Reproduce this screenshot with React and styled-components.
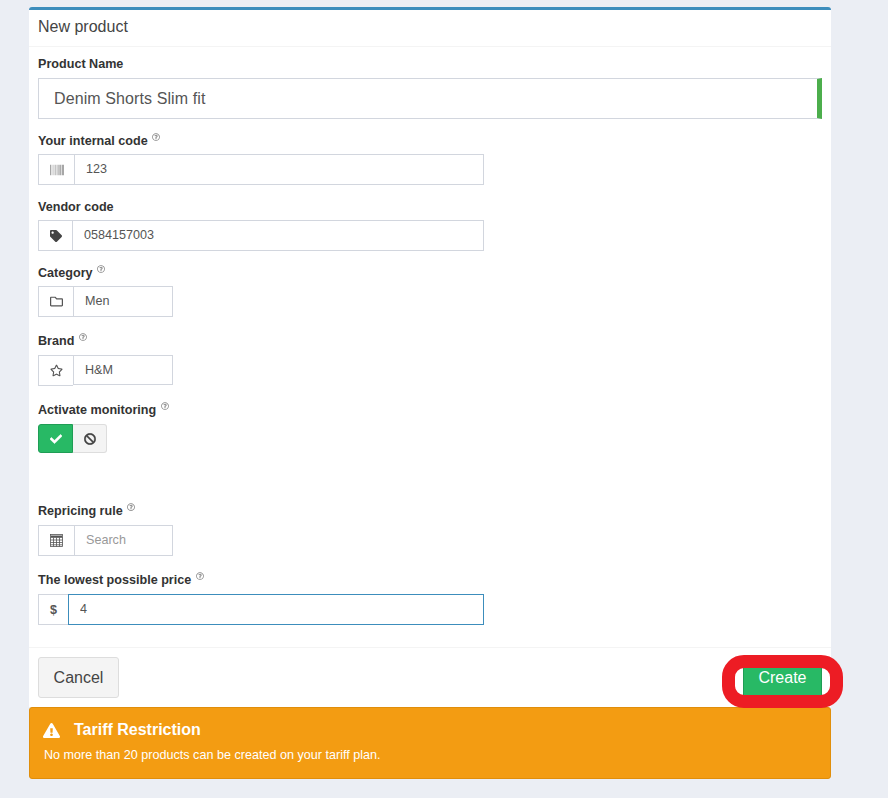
import React from 'react';
import styled, { createGlobalStyle } from 'styled-components';
import {
  FaBarcode,
  FaTag,
  FaRegFolder,
  FaRegStar,
  FaCheck,
  FaBan,
  FaExclamationTriangle,
  FaRegQuestionCircle,
} from 'react-icons/fa';

const GlobalStyle = createGlobalStyle`
  body {
    margin: 0;
    background: #ebeef4;
    font-family: "Liberation Sans", Arial, sans-serif;
    color: #333;
  }
`;

const Page = styled.div`
  width: 802px;
  height: 791px;
  padding: 7px 0 0 29px;
  position: relative;
`;

const Panel = styled.div`
  background: #fff;
  border-top: 3px solid #3c8dbc;
  border-radius: 3px 3px 0 0;
`;

const PanelHeader = styled.div`
  height: 36px;
  line-height: 33px;
  padding: 0 9px;
  font-size: 16px;
  color: #444;
  border-bottom: 1px solid #f4f4f4;
`;

const PanelBody = styled.div`
  padding: 6px 9px 22px;
`;

const Field = styled.div`
  margin-top: ${(props) => props.$top || 0}px;
`;

const Label = styled.label`
  display: block;
  height: ${(props) => (props.$tight ? 20 : 21)}px;
  line-height: 22px;
  margin-bottom: 4px;
  font-size: 12.6px;
  font-weight: bold;
  color: #333;
`;

const Hint = styled(FaRegQuestionCircle)`
  width: 8px;
  height: 8px;
  margin-left: 1px;
  vertical-align: 4px;
  color: #888;
`;

const BigInput = styled.input`
  display: block;
  box-sizing: border-box;
  width: 784px;
  height: 41px;
  padding: 0 15px;
  border: 1px solid #d2d6de;
  border-right: 5px solid #4cae4c;
  font-family: inherit;
  font-size: 16px;
  letter-spacing: 0.1px;
  color: #555;
  outline: none;
`;

const InputGroup = styled.div`
  display: flex;
  align-items: flex-start;
  width: ${(props) => props.$width}px;
`;

const Addon = styled.span`
  display: flex;
  flex: none;
  align-items: center;
  justify-content: center;
  box-sizing: border-box;
  width: ${(props) => props.$width}px;
  height: 31px;
  border: 1px solid #d2d6de;
  border-right: none;
  font-size: 12.6px;
  font-weight: bold;
  color: #555;

  svg {
    width: ${(props) => props.$icon || 14}px;
    height: ${(props) => props.$icon || 14}px;
    color: ${(props) => props.$color || '#555'};
  }
`;

const Input = styled.input`
  flex: 1;
  min-width: 0;
  box-sizing: border-box;
  height: ${(props) => (props.$short ? 30 : 31)}px;
  padding: 0 11px ${(props) => (props.$short ? 0 : 2)}px;
  border: 1px solid ${(props) => (props.$focused ? '#3c8dbc' : '#d2d6de')};
  font-family: inherit;
  font-size: 12.6px;
  color: #555;
  outline: none;

  &::placeholder {
    color: #999;
    opacity: 1;
  }
`;

const Toggle = styled.div`
  display: flex;
  width: 69px;
  height: 29px;
`;

const ToggleButton = styled.span`
  display: flex;
  flex: 1;
  align-items: center;
  justify-content: center;
  border: 1px solid ${(props) => (props.$active ? '#1f9d55' : '#ddd')};
  border-left-width: ${(props) => (props.$active ? 1 : 0)}px;
  border-radius: ${(props) => (props.$active ? '3px 0 0 3px' : '0 3px 3px 0')};
  background: ${(props) => (props.$active ? '#28b965' : '#f4f4f4')};
  color: ${(props) => (props.$active ? '#fff' : '#444')};

  svg {
    width: 12px;
    height: 12px;
    stroke: currentColor;
    stroke-width: 15;
  }
`;

const PanelFooter = styled.div`
  display: flex;
  justify-content: space-between;
  height: 41px;
  padding: 9px;
  border-top: 1px solid #f4f4f4;
`;

const Button = styled.button`
  box-sizing: border-box;
  height: 41px;
  width: ${(props) => props.$width}px;
  padding: 0;
  border: 1px solid ${(props) => (props.$primary ? '#1f9d55' : '#ddd')};
  border-radius: 3px;
  background: ${(props) => (props.$primary ? '#28b965' : '#f4f4f4')};
  color: ${(props) => (props.$primary ? '#fff' : '#444')};
  font-family: inherit;
  font-size: 16px;
`;

const Alert = styled.div`
  box-sizing: border-box;
  height: 72px;
  padding: 12px 14px;
  background: #f39c12;
  border: 1px solid #e08e0b;
  border-radius: 3px;
  color: #fff;
`;

const AlertTitle = styled.div`
  display: flex;
  align-items: center;
  gap: 14px;
  height: 20px;
  font-size: 16px;
  font-weight: bold;

  svg {
    width: 17px;
    height: 17px;
    margin-left: -1px;
  }
`;

const AlertText = styled.div`
  margin-top: 7px;
  font-size: 12.6px;
  line-height: 17px;
`;

// the red marker drawn over the screenshot
const Marker = styled.div`
  position: absolute;
  left: 722px;
  top: 655px;
  box-sizing: border-box;
  width: 121px;
  height: 53px;
  border: 13px solid #ed1c24;
  border-radius: 22px;
`;

const CalculatorIcon = () => (
  <svg viewBox="0 0 13 13" fill="none" stroke="currentColor" strokeWidth="0.8">
    <rect x="0.5" y="0.5" width="12" height="12" />
    <path d="M0.5 3.5h12M0.5 6h12M0.5 8.5h12M0.5 10.8h12M3.5 3.5v9M6.5 3.5v9M9.5 3.5v9" />
    <path d="M1 1.5h11v1.5H1z" fill="currentColor" stroke="none" />
  </svg>
);

const App = () => (
  <Page>
    <GlobalStyle />
    <Panel>
      <PanelHeader>New product</PanelHeader>
      <PanelBody>
        <Field>
          <Label>Product Name</Label>
          <BigInput defaultValue="Denim Shorts Slim fit" readOnly />
        </Field>
        <Field $top={11}>
          <Label $tight>
            Your internal code <Hint />
          </Label>
          <InputGroup $width={446}>
            <Addon $width={36} $color="#888">
              <FaBarcode />
            </Addon>
            <Input defaultValue="123" readOnly />
          </InputGroup>
        </Field>
        <Field $top={11}>
          <Label $tight>Vendor code</Label>
          <InputGroup $width={446}>
            <Addon $width={34} $icon={12} $color="#444">
              <FaTag />
            </Addon>
            <Input defaultValue="0584157003" readOnly />
          </InputGroup>
        </Field>
        <Field $top={11}>
          <Label $tight>
            Category <Hint />
          </Label>
          <InputGroup $width={135}>
            <Addon $width={35} $icon={13}>
              <FaRegFolder />
            </Addon>
            <Input defaultValue="Men" readOnly />
          </InputGroup>
        </Field>
        <Field $top={13}>
          <Label>
            Brand <Hint />
          </Label>
          <InputGroup $width={135}>
            <Addon $width={35} $icon={13}>
              <FaRegStar />
            </Addon>
            <Input $short defaultValue="H&M" readOnly />
          </InputGroup>
        </Field>
        <Field $top={13}>
          <Label>
            Activate monitoring <Hint />
          </Label>
          <Toggle>
            <ToggleButton $active>
              <FaCheck />
            </ToggleButton>
            <ToggleButton>
              <FaBan />
            </ToggleButton>
          </Toggle>
        </Field>
        <Field $top={47}>
          <Label>
            Repricing rule <Hint />
          </Label>
          <InputGroup $width={135}>
            <Addon $width={36} $icon={13}>
              <CalculatorIcon />
            </Addon>
            <Input placeholder="Search" readOnly />
          </InputGroup>
        </Field>
        <Field $top={13}>
          <Label>
            The lowest possible price <Hint />
          </Label>
          <InputGroup $width={446}>
            <Addon $width={30}>$</Addon>
            <Input $focused defaultValue="4" readOnly />
          </InputGroup>
        </Field>
      </PanelBody>
      <PanelFooter>
        <Button $width={81}>Cancel</Button>
        <Button $primary $width={79}>
          Create
        </Button>
      </PanelFooter>
    </Panel>
    <Alert>
      <AlertTitle>
        <FaExclamationTriangle />
        Tariff Restriction
      </AlertTitle>
      <AlertText>No more than 20 products can be created on your tariff plan.</AlertText>
    </Alert>
    <Marker />
  </Page>
);

export default App;
